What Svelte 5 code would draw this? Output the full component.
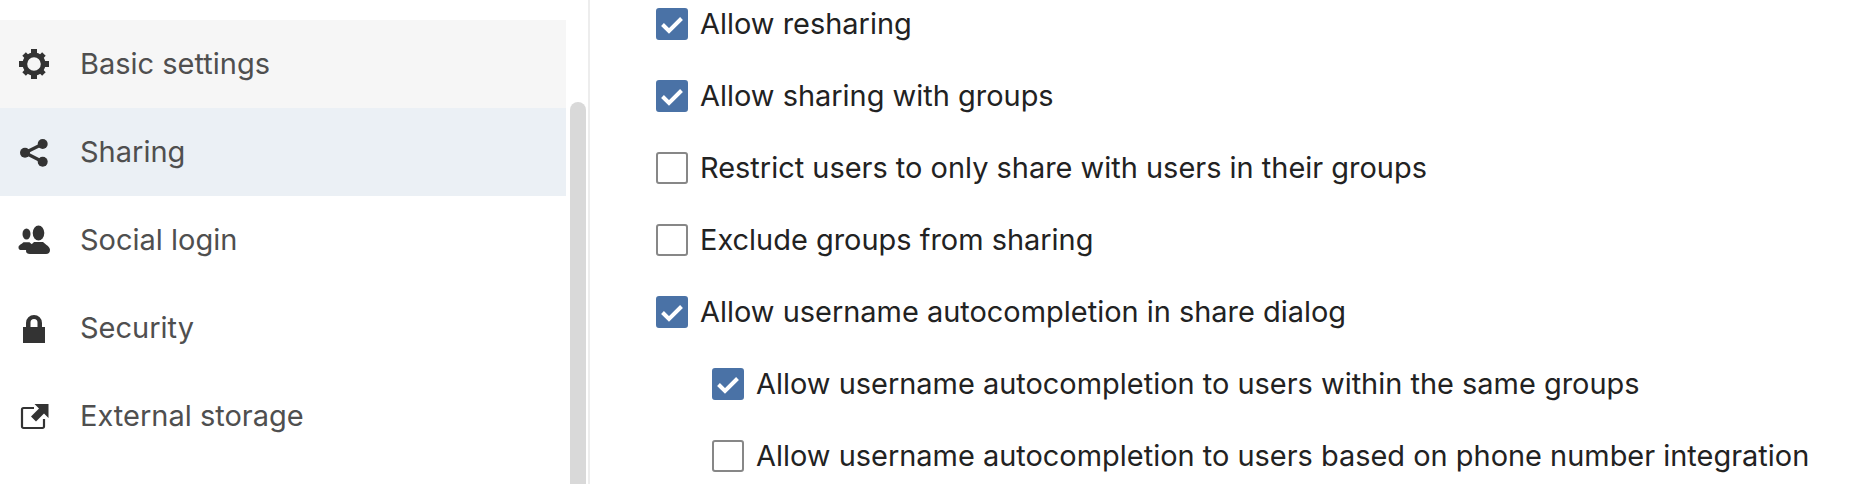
<script>
  const nav = [
    { id: 'gear', label: 'Basic settings', state: 'hover' },
    { id: 'share', label: 'Sharing', state: 'active' },
    { id: 'people', label: 'Social login', state: '' },
    { id: 'lock', label: 'Security', state: '' },
    { id: 'external', label: 'External storage', state: '' }
  ];
  const options = [
    { label: 'Allow resharing', checked: true, nested: false },
    { label: 'Allow sharing with groups', checked: true, nested: false },
    { label: 'Restrict users to only share with users in their groups', checked: false, nested: false },
    { label: 'Exclude groups from sharing', checked: false, nested: false },
    { label: 'Allow username autocompletion in share dialog', checked: true, nested: false },
    { label: 'Allow username autocompletion to users within the same groups', checked: true, nested: true },
    { label: 'Allow username autocompletion to users based on phone number integration', checked: false, nested: true }
  ];
</script>

<div class="page">
  <aside class="sidebar">
    <nav class="nav">
      {#each nav as item}
        <div class="nav-item {item.state}">
          <svg class="icon" viewBox="0 0 32 32" width="32" height="32" aria-hidden="true">
            {#if item.id === 'gear'}
              <g fill="#333">
                <path fill-rule="evenodd" d="M16 4.500a11.500 11.500 0 1 0 0 23a11.500 11.500 0 1 0 0-23zM16 9.200a6.800 6.800 0 1 1 0 13.600a6.800 6.800 0 1 1 0-13.600z" />
                <rect x="13" y="1" width="6" height="5" />
                <rect x="13" y="26" width="6" height="5" />
                <rect x="1" y="13" width="5" height="6" />
                <rect x="26" y="13" width="5" height="6" />
                <rect x="13.500" y="2" width="5" height="5" transform="rotate(45 16 16)" />
                <rect x="13.500" y="25" width="5" height="5" transform="rotate(45 16 16)" />
                <rect x="2" y="13.500" width="5" height="5" transform="rotate(45 16 16)" />
                <rect x="25" y="13.500" width="5" height="5" transform="rotate(45 16 16)" />
              </g>
            {:else if item.id === 'share'}
              <g fill="#333">
                <circle cx="7" cy="16.700" r="5" />
                <circle cx="24.700" cy="8" r="5" />
                <circle cx="24.700" cy="25.700" r="5" />
                <path d="M7 16.700L24.700 8M7 16.700L24.700 25.700" stroke="#333" stroke-width="3.200" fill="none" />
              </g>
            {:else if item.id === 'people'}
              <g fill="#333">
                <ellipse cx="8.500" cy="10" rx="4" ry="5.500" />
                <path d="M.5 23.500c0-2.500 3.500-3.500 5-5.200h6c1.500 1.200 3 2.200 3 4v3.700H2.500c-1.200 0-2-1.200-2-2.500z" />
                <ellipse cx="20.500" cy="9" rx="5.800" ry="7.500" />
                <path d="M8 27c0-4 5-5.500 8-9h9c3 3 7 4.500 7 8c0 2.500-1.500 4-4 4H12c-2.500 0-4-1-4-3z" />
              </g>
            {:else if item.id === 'lock'}
              <path fill="#333" fill-rule="evenodd" d="M5 15h3v-4a8 8 0 0 1 16 0v4h3v16H5zM12.500 15h7v-4.500a3.500 3.500 0 0 0-7 0z" />
            {:else if item.id === 'external'}
              <path d="M16 8H5.500A1.500 1.500 0 0 0 4 9.500V26.500A1.500 1.500 0 0 0 5.500 28H24.500A1.500 1.500 0 0 0 26 26.500V19" fill="none" stroke="#333" stroke-width="2.200" />
              <path fill="#333" d="M30.500 4H16.500L21 8.500L13 16.500L18 21.500L26 13.500L30.500 18z" />
            {/if}
          </svg>
          <span class="nav-label">{item.label}</span>
        </div>
      {/each}
    </nav>
    <div class="track"><div class="thumb"></div></div>
  </aside>

  <main class="content">
    {#each options as opt}
      <div class="option" class:nested={opt.nested}>
        <span class="box" class:checked={opt.checked}>
          {#if opt.checked}
            <svg viewBox="0 0 32 32" width="32" height="32" aria-hidden="true">
              <path d="M6.500 16.500L13 23L25.500 10.500" fill="none" stroke="#fff" stroke-width="4" />
            </svg>
          {/if}
        </span>
        <span class="text">{opt.label}</span>
      </div>
    {/each}
  </main>
</div>

<style>
  :global(body) {
    margin: 0;
    background: #fff;
  }
  .page {
    display: flex;
    width: 1850px;
    height: 484px;
    overflow: hidden;
    font-family: Inter, "Liberation Sans", sans-serif;
  }
  .sidebar {
    flex: 0 0 588px;
    display: flex;
    border-right: 2px solid #ededed;
  }
  .nav {
    flex: 0 0 566px;
    padding-top: 20px;
  }
  .nav-item {
    display: flex;
    align-items: center;
    height: 88px;
    padding-left: 18px;
    gap: 30px;
  }
  .nav-item.hover {
    background: #f6f6f6;
  }
  .nav-item.active {
    background: #ebf0f5;
  }
  .icon {
    flex: none;
  }
  .nav-label {
    font-size: 29px;
    color: #4f4f4f;
    margin-bottom: 2px;
  }
  .track {
    flex: 1;
    padding: 102px 2px 0 4px;
  }
  .thumb {
    height: 500px;
    background: #d9d9d9;
    border-radius: 8px 8px 0 0;
  }
  .content {
    flex: 1;
    padding: 8px 0 0 66px;
    display: flex;
    flex-direction: column;
    gap: 40px;
  }
  .option {
    display: flex;
    align-items: center;
    height: 32px;
    gap: 12px;
    white-space: nowrap;
  }
  .option.nested {
    margin-left: 56px;
  }
  .box {
    flex: none;
    box-sizing: border-box;
    width: 32px;
    height: 32px;
    border: 2px solid #878787;
    border-radius: 3px;
    background: #fff;
    position: relative;
  }
  .box.checked {
    background: #4a72a6;
    border-color: #4a72a6;
  }
  .box svg {
    position: absolute;
    left: -2px;
    top: -2px;
  }
  .text {
    font-size: 28.94px;
    color: #222;
    margin-bottom: 2px;
  }
</style>
